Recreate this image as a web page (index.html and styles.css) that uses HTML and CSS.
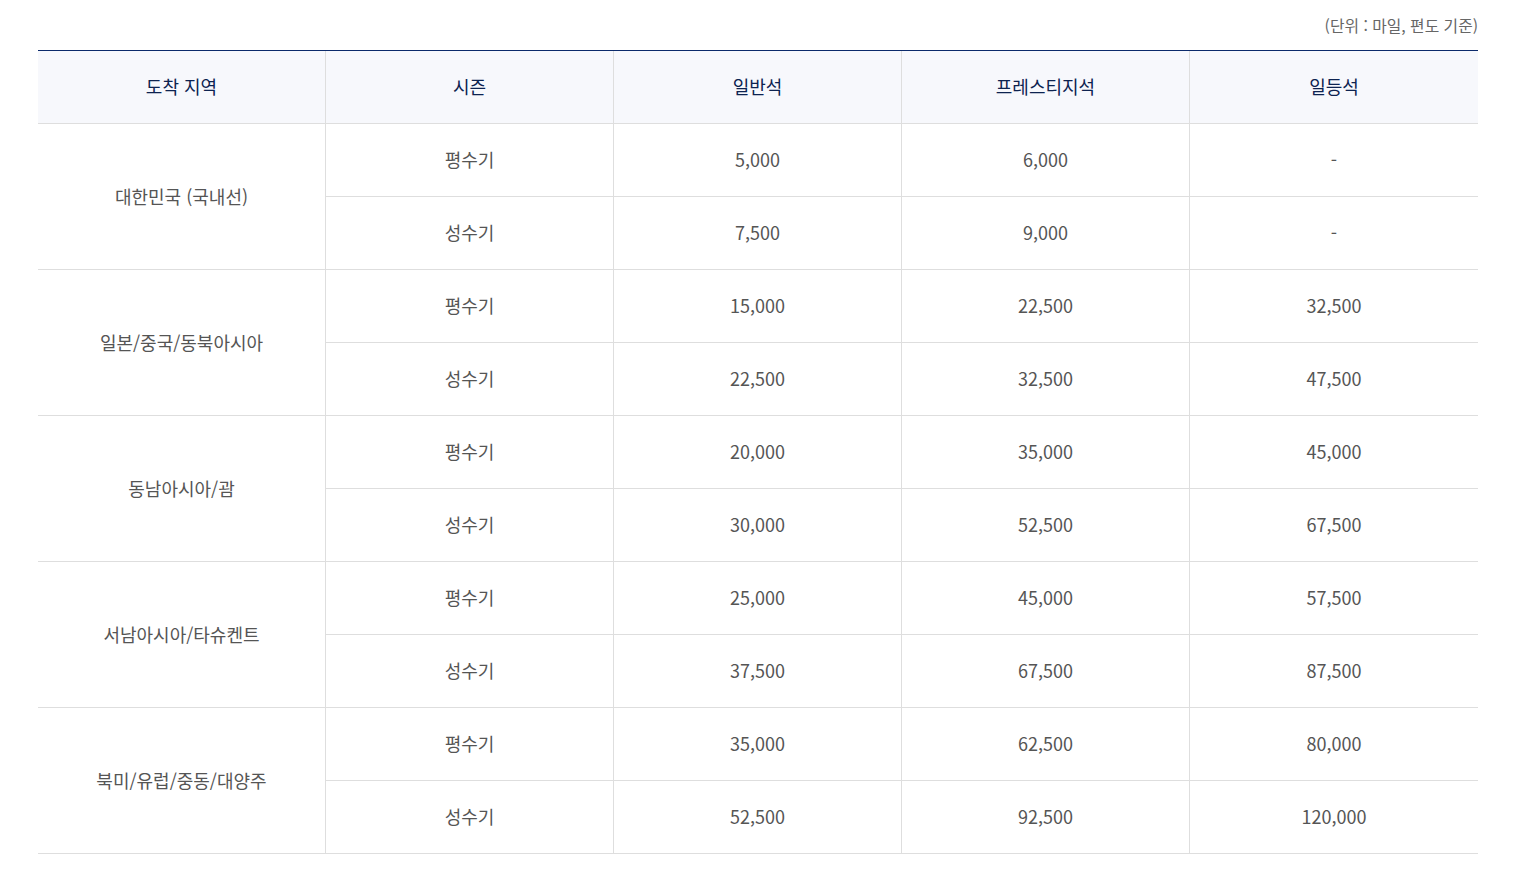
FILE: index.html
```html
<!DOCTYPE html>
<html lang="ko">
<head>
<meta charset="utf-8">
<link rel="stylesheet" href="styles.css">
</head>
<body>
<div class="wrap">
  <p class="unit">(단위 : 마일, 편도 기준)</p>
  <table class="mile">
    <thead>
      <tr><th>도착 지역</th><th>시즌</th><th>일반석</th><th>프레스티지석</th><th class="last">일등석</th></tr>
    </thead>
    <tbody>
      <tr><td rowspan="2" class="region">대한민국 (국내선)</td><td>평수기</td><td>5,000</td><td>6,000</td><td class="last">-</td></tr>
      <tr><td>성수기</td><td>7,500</td><td>9,000</td><td class="last">-</td></tr>
      <tr><td rowspan="2" class="region">일본/중국/동북아시아</td><td>평수기</td><td>15,000</td><td>22,500</td><td class="last">32,500</td></tr>
      <tr><td>성수기</td><td>22,500</td><td>32,500</td><td class="last">47,500</td></tr>
      <tr><td rowspan="2" class="region">동남아시아/괌</td><td>평수기</td><td>20,000</td><td>35,000</td><td class="last">45,000</td></tr>
      <tr><td>성수기</td><td>30,000</td><td>52,500</td><td class="last">67,500</td></tr>
      <tr><td rowspan="2" class="region">서남아시아/타슈켄트</td><td>평수기</td><td>25,000</td><td>45,000</td><td class="last">57,500</td></tr>
      <tr><td>성수기</td><td>37,500</td><td>67,500</td><td class="last">87,500</td></tr>
      <tr><td rowspan="2" class="region">북미/유럽/중동/대양주</td><td>평수기</td><td>35,000</td><td>62,500</td><td class="last">80,000</td></tr>
      <tr><td>성수기</td><td>52,500</td><td>92,500</td><td class="last">120,000</td></tr>
    </tbody>
  </table>
</div>
</body>
</html>
```

FILE: styles.css
```css
html, body {
  margin: 0;
  padding: 0;
  background: #fff;
}
body {
  font-family: "Noto Sans CJK KR", "Noto Sans", sans-serif;
}
.wrap {
  width: 1440px;
  margin-left: 38px;
  padding-top: 15px;
}
.unit {
  margin: 0 0 13px 0;
  text-align: right;
  font-size: 15.8px;
  line-height: 22px;
  color: #666;
}
.mile {
  width: 1440px;
  table-layout: fixed;
  border-collapse: separate;
  border-spacing: 0;
  border-top: 1px solid #0b2a6b;
}
.mile th,
.mile td {
  padding: 0 0 2px 0;
  text-align: center;
  vertical-align: middle;
  font-size: 18px;
  line-height: 24px;
  font-weight: 400;
  border-right: 1px solid #dedede;
  border-bottom: 1px solid #dedede;
}
.mile th {
  height: 70px;
  background: #f7f8fc;
  color: #0d2350;
}
.mile td {
  height: 70px;
  color: #555;
}
.mile .last {
  border-right: 0;
}
```
